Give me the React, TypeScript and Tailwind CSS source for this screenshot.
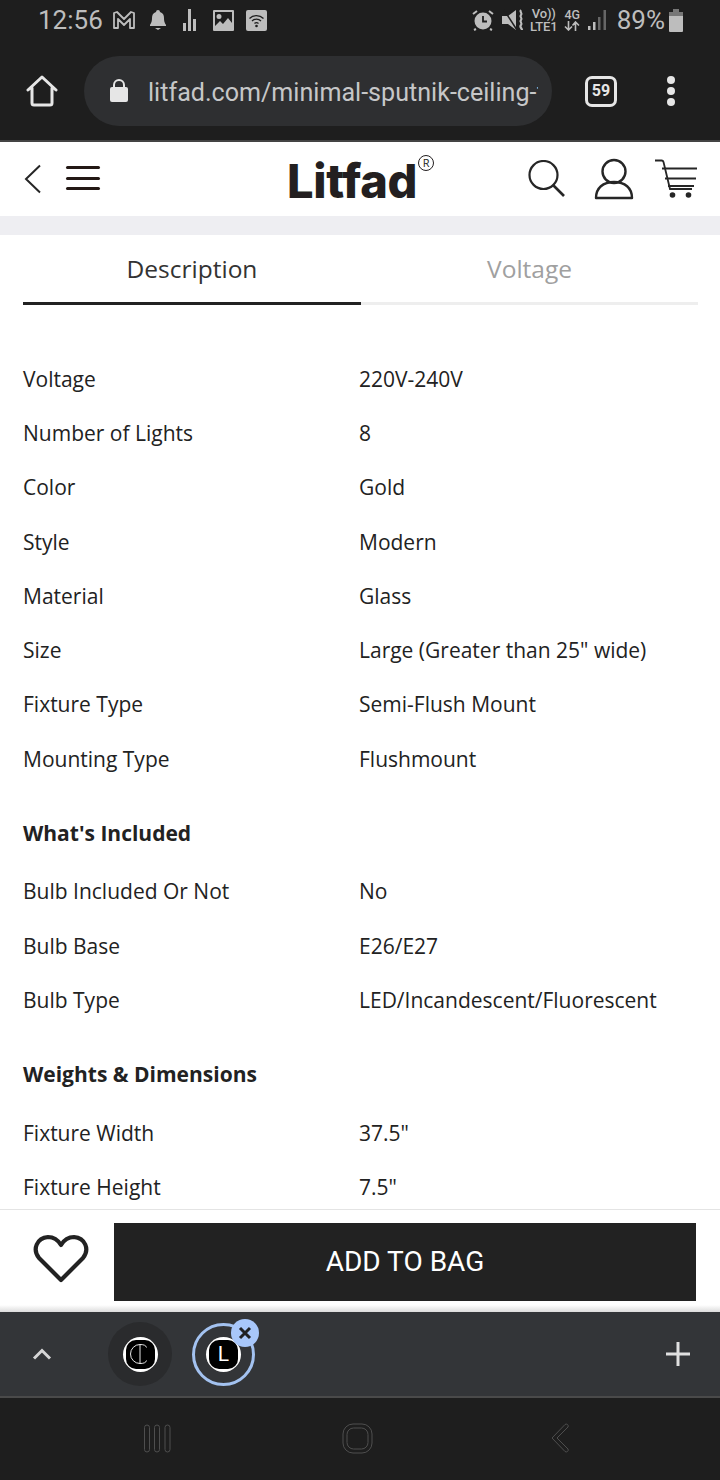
import { ReactNode } from 'react';

const specGroups: { title?: string; rows: [string, string][] }[] = [
  {
    rows: [
      ['Voltage', '220V-240V'],
      ['Number of Lights', '8'],
      ['Color', 'Gold'],
      ['Style', 'Modern'],
      ['Material', 'Glass'],
      ['Size', 'Large (Greater than 25" wide)'],
      ['Fixture Type', 'Semi-Flush Mount'],
      ['Mounting Type', 'Flushmount'],
    ],
  },
  {
    title: "What's Included",
    rows: [
      ['Bulb Included Or Not', 'No'],
      ['Bulb Base', 'E26/E27'],
      ['Bulb Type', 'LED/Incandescent/Fluorescent'],
    ],
  },
  {
    title: 'Weights & Dimensions',
    rows: [
      ['Fixture Width', '37.5"'],
      ['Fixture Height', '7.5"'],
    ],
  },
];

function Svg({ w, h, children, className }: { w: number; h: number; children: ReactNode; className?: string }) {
  return (
    <svg width={w} height={h} viewBox={`0 0 ${w} ${h}`} fill="none" className={`block shrink-0 ${className ?? ''}`}>
      {children}
    </svg>
  );
}

function StatusBar() {
  const c = '#bdbdbd';
  return (
    <div className="h-[40px] flex items-center justify-between pl-[38px] pr-[37px] text-[#bdbdbd] font-['Roboto',sans-serif]">
      <div className="flex items-center">
        <span className="text-[26px] leading-none">12:56</span>
        <Svg w={24} h={20} className="ml-[9px]">
          <path d="M2 18V3l3-1 7 7 7-7 3 1v15h-4V9l-6 6-6-6v9z" stroke={c} strokeWidth="1.800" strokeLinejoin="round" />
        </Svg>
        <Svg w={18} h={22} className="ml-[13px]">
          <path d="M9 1a2 2 0 0 1 2 2c3 1 4 3 4 6 0 4 1 5 2 7v1H1v-1c1-2 2-3 2-7 0-3 1-5 4-6a2 2 0 0 1 2-2zM6 19h6l-3 2z" fill={c} />
        </Svg>
        <Svg w={15} h={24} className="ml-[15px]">
          <path d="M1 15h3v8H1zM6 1h3v22H6zM11 11h3v12h-3z" fill={c} />
        </Svg>
        <Svg w={21} h={21} className="ml-[16px]">
          <path fillRule="evenodd" clipRule="evenodd" d="M0 1a1 1 0 0 1 1-1h19a1 1 0 0 1 1 1v19a1 1 0 0 1-1 1H1a1 1 0 0 1-1-1zM2 2v14l5-5 3 3 5-6 4 5V2zM6 4a2.400 2.400 0 1 1 0 5 2.400 2.400 0 0 1 0-5z" fill={c} />
        </Svg>
        <Svg w={21} h={21} className="ml-[12px]">
          <rect width="21" height="21" rx="2" fill={c} />
          <path d="M3.500 8.500a10 10 0 0 1 14 0M6 11a6.500 6.500 0 0 1 9 0M8.500 13.500a3 3 0 0 1 4 0" stroke="#1e1e1e" strokeWidth="1.300" />
          <circle cx="10.500" cy="16" r="1.300" fill="#1e1e1e" />
        </Svg>
      </div>
      <div className="flex items-center">
        <Svg w={22} h={22}>
          <circle cx="11" cy="12" r="8.500" fill={c} />
          <path d="M11 7v5.500h4" stroke="#1e1e1e" strokeWidth="1.800" />
          <path d="M1 5l4-3M21 5l-4-3M4 20l-2 1M18 20l2 1" stroke={c} strokeWidth="2" />
        </Svg>
        <Svg w={22} h={22} className="ml-[8px]">
          <path d="M0 7h6l8-6v20l-8-6H0z" fill={c} />
          <path d="M19 1c-2 2 2 3 0 5s2 3 0 5 2 3 0 5 1 3 1 5" stroke={c} strokeWidth="2.200" />
          <path d="M2 1l13 20" stroke="#1e1e1e" strokeWidth="1.500" />
        </Svg>
        <div className="ml-[7px] w-[26px] flex flex-col items-center text-[13px] leading-[13px] font-medium tracking-[-0.2px]">
          <span>Vo))</span>
          <span>LTE1</span>
        </div>
        <div className="ml-[7px] w-[17px] flex flex-col items-center">
          <span className="text-[12.500px] leading-[12px] font-medium">4G</span>
          <Svg w={16} h={10}>
            <path d="M4.500 0v9M1 5.500l3.500 3.500L8 5.500M11.500 10V1M8.500 4.500L11.500 1l3.500 3.500" stroke={c} strokeWidth="1.600" />
          </Svg>
        </div>
        <Svg w={19} h={21} className="ml-[7px]">
          <path d="M0 16h2.500v4H0z" fill={c} />
          <path d="M5 12h2.500v8H5z" fill={c} />
          <path d="M10 7h2.500v13H10zM15.500 0H18v20h-2.500z" fill="#666" />
        </Svg>
        <span className="ml-[10px] text-[26px] leading-none">89%</span>
        <Svg w={14} h={23} className="ml-[4px]">
          <path d="M4 0h6v3H4z" fill="#777" />
          <path d="M0 3h14v4H0z" fill="#777" />
          <path d="M0 7h14v15a1 1 0 0 1-1 1H1a1 1 0 0 1-1-1z" fill={c} />
        </Svg>
      </div>
    </div>
  );
}

function BrowserBar() {
  const c = '#e6e6e6';
  return (
    <div className="h-[100px] flex items-center pl-[26px] pt-[2px] font-['Roboto',sans-serif]">
      <Svg w={32} h={32}>
        <path d="M2 15L16 2l14 13M6 13v15a2 2 0 0 0 2 2h16a2 2 0 0 0 2-2V13" stroke={c} strokeWidth="3" strokeLinejoin="round" strokeLinecap="round" />
      </Svg>
      <div className="ml-[26px] w-[468px] h-[70px] rounded-full bg-[#2e2f31] flex items-center pl-[26px]">
        <Svg w={18} h={24}>
          <path d="M4 10V6a5 5 0 0 1 10 0v4" stroke={c} strokeWidth="2" />
          <rect x="0" y="8" width="18" height="15" rx="2" fill={c} />
        </Svg>
        <div className="ml-[20px] mt-[3px] w-[390px] overflow-hidden whitespace-nowrap text-[25.100px] leading-[30px] text-[#c6c7c8]">
          litfad.com/minimal-sputnik-ceiling-f
        </div>
      </div>
      <div className="ml-[33px] w-[32px] h-[31px] rounded-[7px] border-[3px] border-[#e6e6e6] flex items-center justify-center text-[#e6e6e6] text-[16px] leading-none font-bold">
        59
      </div>
      <div className="ml-[50px] flex flex-col gap-[3px]">
        <span className="w-[8px] h-[8px] rounded-full bg-[#e6e6e6]" />
        <span className="w-[8px] h-[8px] rounded-full bg-[#e6e6e6]" />
        <span className="w-[8px] h-[8px] rounded-full bg-[#e6e6e6]" />
      </div>
    </div>
  );
}

function SiteHeader() {
  const ink = '#262626';
  return (
    <div className="h-[74px] bg-white flex items-center relative">
      <Svg w={18} h={30} className="ml-[24px] -mt-[1px]">
        <path d="M16 1.500L2 15l14 13.500" stroke={ink} strokeWidth="2" />
      </Svg>
      <div className="ml-[24px] w-[34px] -mt-[2px] flex flex-col gap-[7.500px]">
        <span className="h-[3px] rounded-full bg-[#231815]" />
        <span className="h-[3px] rounded-full bg-[#231815]" />
        <span className="h-[3px] rounded-full bg-[#231815]" />
      </div>
      <div className="ml-[187px] mt-[3px] flex items-start">
        <span className="font-['Inter',sans-serif] font-extrabold text-[47px] leading-[50px] tracking-[-0.3px] text-[#231f20]">
          Litfad
        </span>
        <span className="-mt-[1px] ml-[1px] w-[16px] h-[16px] rounded-full border border-[#231f20] flex items-center justify-center text-[11px] leading-none text-[#231f20] font-['Open_Sans',sans-serif]">
          R
        </span>
      </div>
      <div className="ml-auto flex items-center pr-[22px] -mt-[1px]">
        <Svg w={38} h={38}>
          <circle cx="15.500" cy="15" r="14" stroke={ink} strokeWidth="2.200" />
          <path d="M25 25l11 11" stroke={ink} strokeWidth="2.600" />
        </Svg>
        <Svg w={40} h={42} className="ml-[28px]">
          <circle cx="20" cy="13.500" r="11.500" stroke={ink} strokeWidth="2.400" />
          <path d="M2 40c0-10 7-16 18-16s18 6 18 16z" stroke={ink} strokeWidth="2.400" strokeLinejoin="round" />
        </Svg>
        <Svg w={44} h={40} className="ml-[20px]">
          <path d="M1 1.500h6.500a2 2 0 0 1 2 1.500L16 30h22" stroke={ink} strokeWidth="1.800" />
          <path d="M8 9.500h35M11 19.500h31M14 27h26" stroke={ink} strokeWidth="1.800" />
          <circle cx="18.500" cy="36" r="2.800" fill={ink} />
          <circle cx="34.500" cy="36" r="2.800" fill={ink} />
        </Svg>
      </div>
    </div>
  );
}

function Tabs() {
  return (
    <div className="h-[70px] pl-[23px] pr-[22px] flex text-[24.500px] font-['Open_Sans',sans-serif]">
      <div className="w-[338px] border-b-[3px] border-[#222222] text-[#333333] flex items-center justify-center pt-[2px]">
        Description
      </div>
      <div className="flex-1 border-b-[3px] border-[#eeeeee] text-[#a0a0a0] flex items-center justify-center pt-[2px]">
        Voltage
      </div>
    </div>
  );
}

function Specs() {
  return (
    <div className="pt-[47.500px] font-['Open_Sans',sans-serif] text-[21px] text-[#222222]">
      {specGroups.map((group) => (
        <div key={group.title ?? 'main'}>
          {group.title && (
            <div className="h-[78.500px] pt-[15px] pl-[23px] flex items-center font-bold">{group.title}</div>
          )}
          {group.rows.map(([label, value]) => (
            <div key={label} className="h-[54.250px] flex items-center">
              <div className="w-[359px] pl-[23px]">{label}</div>
              <div>{value}</div>
            </div>
          ))}
        </div>
      ))}
    </div>
  );
}

function BuyBar() {
  return (
    <div className="h-[103px] shrink-0 bg-white border-t border-[#e4e4e4] relative">
      <div className="flex items-start pt-[13px] pl-[33px]">
        <Svg w={56} h={50} className="mt-[11px]">
          <path d="M28 46L6 24C-1 15 4 4 15 3c6 0 10 3 13 8 3-5 7-8 13-8 11 1 16 12 9 21z" stroke="#222222" strokeWidth="4.200" strokeLinejoin="round" />
        </Svg>
        <div className="ml-[25px] w-[582px] h-[78px] bg-[#222222] flex items-center justify-center text-white text-[28px] leading-[34px] font-['Roboto',sans-serif]">
          ADD TO BAG
        </div>
      </div>
      <div className="absolute left-0 right-0 bottom-0 h-[7px] bg-gradient-to-b from-white to-[#dcdcdc]" />
    </div>
  );
}

function BubbleBar() {
  return (
    <div className="h-[86px] shrink-0 bg-[#333538] border-b-2 border-[#4a4a4a] flex items-center pl-[32px] pr-[29px]">
      <Svg w={20} h={12}>
        <path d="M2 10.500l8-8 8 8" stroke="#d6d6d6" strokeWidth="3" />
      </Svg>
      <div className="ml-[56px] w-[64px] h-[64px] rounded-full bg-[#2a2b2d] flex items-center justify-center">
        <div className="w-[35px] h-[35px] rounded-full bg-white flex items-center justify-center">
          <div className="w-[29px] h-[29px] rounded-[10px] bg-black flex items-center justify-center">
            <Svg w={20} h={22}>
              <path d="M10 1.500a9.500 9.500 0 1 0 0 19M10 1.500v19M10 1.500c4 0 6 1 6.500 3M10 20.500c4 0 6-1 6.500-3" stroke="#ffffff" strokeWidth="0.900" />
            </Svg>
          </div>
        </div>
      </div>
      <div className="ml-[20px] w-[63px] h-[63px] rounded-full border-[3px] border-[#a3c2f0] flex items-center justify-center relative">
        <div className="w-[35px] h-[35px] rounded-full bg-white flex items-center justify-center">
          <div className="w-[29px] h-[29px] rounded-[10px] bg-black flex items-center justify-center text-white text-[21px] leading-none font-['Roboto',sans-serif]">
            L
          </div>
        </div>
        <div className="absolute -top-[7px] -right-[7px] w-[28px] h-[28px] rounded-full bg-[#a8c7fa] flex items-center justify-center">
          <Svg w={14} h={14}>
            <path d="M2 2l10 10M12 2L2 12" stroke="#202124" strokeWidth="3" />
          </Svg>
        </div>
      </div>
      <Svg w={26} h={26} className="ml-auto">
        <path d="M13 1v24M1 13h24" stroke="#e0e0e0" strokeWidth="3" />
      </Svg>
    </div>
  );
}

function NavBar() {
  const s = '#4e4e4e';
  return (
    <div className="h-[82px] shrink-0 relative bg-[#1e1e1e]">
      <div className="h-full flex items-center pl-[143px] pb-[2px]">
        <Svg w={28} h={29}>
          <rect x="1.500" y="1" width="5" height="27" rx="2.500" stroke={s} />
          <rect x="11.500" y="1" width="5" height="27" rx="2.500" stroke={s} />
          <rect x="22" y="1" width="5" height="27" rx="2.500" stroke={s} />
        </Svg>
        <Svg w={32} h={31} className="ml-[171px]">
          <rect x="1" y="1" width="29" height="29" rx="10" stroke={s} />
          <rect x="5" y="5" width="21" height="21" rx="6.500" stroke={s} />
        </Svg>
        <Svg w={20} h={30} className="ml-[176px]">
          <path d="M15 1.500a2 2 0 0 1 3 2.500L7 15l11 11a2 2 0 0 1-3 2.500L2 15z" stroke={s} />
        </Svg>
      </div>
    </div>
  );
}

export default function App() {
  return (
    <div className="w-[720px] h-[1480px] flex flex-col overflow-hidden bg-white">
      <div className="shrink-0 bg-[#1e1e1e] border-b-2 border-[#444444]">
        <StatusBar />
        <BrowserBar />
      </div>
      <div className="shrink-0">
        <SiteHeader />
        <div className="h-[19px] bg-[#eeeef2]" />
      </div>
      <div className="flex-1 min-h-0 overflow-hidden">
        <Tabs />
        <Specs />
      </div>
      <BuyBar />
      <BubbleBar />
      <NavBar />
    </div>
  );
}
